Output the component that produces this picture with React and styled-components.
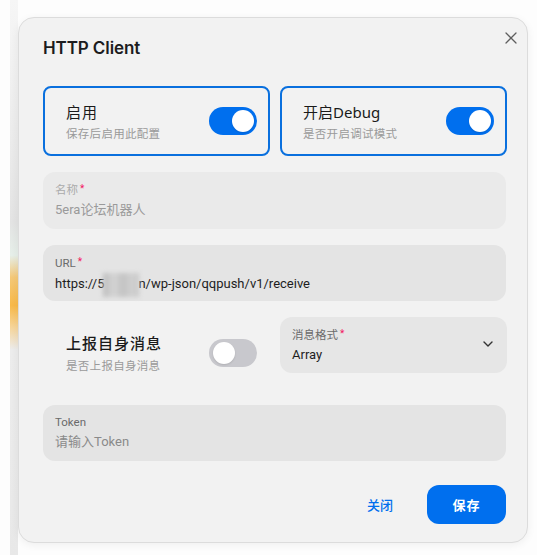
import React from "react";
import styled, { createGlobalStyle } from "styled-components";

const Global = createGlobalStyle`
  html, body { margin: 0; padding: 0; }
  body {
    width: 537px;
    height: 555px;
    overflow: hidden;
    font-family: "Noto Sans", "Noto Sans CJK SC", sans-serif;
    background:
      linear-gradient(to bottom, #f6f6f6 0%, #e9e9e9 30%, #e3e3e3 40%, #e6efe9 46%, #f4c877 50%, #f8b948 55%, #f6d59a 59%, #ececec 63%, #e8e8e8 100%) 10px 0 / 8px 100% no-repeat,
      #fdfdfd;
  }
`;

const Page = styled.div`
  padding: 17px 0 0 18px;
`;

const Modal = styled.div`
  width: 510px;
  height: 526px;
  box-sizing: border-box;
  background: #f2f2f2;
  border: 1px solid #dcdcdc;
  border-radius: 16px;
  box-shadow: 0 2px 8px rgba(0, 0, 0, 0.06);
  padding: 18px 21px 0 24px;
  display: flex;
  flex-direction: column;
  position: relative;
`;

const Header = styled.div`
  display: flex;
  align-items: center;
  height: 24px;
  margin-bottom: 26px;
`;

const Title = styled.h2`
  margin: 0;
  font-family: "Inter", "Noto Sans", sans-serif;
  font-size: 17px;
  font-weight: 600;
  color: #1c1c1e;
  letter-spacing: -0.1px;
`;

const CloseBtn = styled.button`
  position: absolute;
  top: 8px;
  right: 4px;
  width: 24px;
  height: 24px;
  border: 0;
  padding: 0;
  background: transparent;
  display: flex;
  align-items: center;
  justify-content: center;
  cursor: pointer;
`;

const Body = styled.div`
  display: flex;
  flex-direction: column;
`;

const Row = styled.div`
  display: grid;
  grid-template-columns: 227px 227px;
  align-items: start;
  gap: 10px;
  margin-bottom: 16px;
`;

const SwitchCard = styled.div`
  box-sizing: border-box;
  height: ${(p) => (p.$h ? p.$h : 70)}px;
  border: 2px solid ${(p) => (p.$bordered ? "#0a70de" : "transparent")};
  border-radius: 8px;
  display: flex;
  align-items: center;
  justify-content: space-between;
  padding: 0 11px 0 21px;
`;

const TextCol = styled.div`
  display: flex;
  flex-direction: column;
  gap: ${(p) => p.$gap || 3}px;
`;

const CardTitle = styled.div`
  font-family: "Noto Sans", "Noto Sans CJK SC", sans-serif;
  font-size: 15px;
  line-height: 20px;
  font-weight: ${(p) => p.$weight || 400};
  color: #1a1a1a;
  letter-spacing: ${(p) => p.$ls || 0}px;
`;

const CardDesc = styled.div`
  font-family: "Noto Sans CJK SC", sans-serif;
  font-size: 11.5px;
  line-height: 16px;
  color: #9a9a9a;
  letter-spacing: 0.3px;
`;

const Track = styled.div`
  width: 48px;
  height: 28px;
  border-radius: 14px;
  background: ${(p) => (p.$on ? "#006fee" : "#c8c8cd")};
  display: flex;
  align-items: center;
  justify-content: ${(p) => (p.$on ? "flex-end" : "flex-start")};
  padding: 0 3.5px;
  box-sizing: border-box;
  flex-shrink: 0;
`;

const Thumb = styled.div`
  width: 22px;
  height: 22px;
  border-radius: 50%;
  background: #fff;
  box-shadow: 0 1px 2px rgba(0, 0, 0, 0.12);
`;

const Field = styled.div`
  box-sizing: border-box;
  height: ${(p) => p.$h || 56}px;
  background: ${(p) => p.$bg || "#e4e4e4"};
  border-radius: 12px;
  padding: 8px 12px 0 12px;
  display: flex;
  flex-direction: column;
  margin-bottom: ${(p) => (p.$mb != null ? p.$mb : 16)}px;
`;

const Label = styled.div`
  font-family: "Roboto", "Noto Sans CJK SC", sans-serif;
  font-size: 11.5px;
  line-height: 18px;
  color: ${(p) => p.$color || "#6b6b6b"};
`;

const Star = styled.span`
  color: #f31260;
  margin-left: 2px;
  font-size: 10px;
  vertical-align: 2px;
`;

const Value = styled.div`
  font-family: "Roboto", "Noto Sans CJK SC", sans-serif;
  font-size: 13px;
  line-height: 20px;
  margin-top: 1px;
  color: ${(p) => p.$color || "#1e1e1e"};
  white-space: nowrap;
`;

const Blur = styled.span`
  display: inline-block;
  width: 36px;
  height: 24px;
  vertical-align: -9px;
  background: linear-gradient(90deg, #bdbdbd 0%, #d4d4d4 30%, #c3c3c3 55%, #d0d0d0 80%, #c8c8c8 100%);
  filter: blur(2px);
  margin: 0 -1px;
`;

const SelectField = styled(Field)`
  flex-direction: row;
  align-items: flex-start;
  justify-content: space-between;
  padding-right: 14px;
`;

const Chevron = styled.div`
  display: flex;
  margin-top: 16px;
`;

const Footer = styled.div`
  display: flex;
  justify-content: flex-end;
  align-items: center;
  gap: 15px;
  margin-top: 24px;
`;

const Button = styled.button`
  height: 39px;
  min-width: ${(p) => (p.$primary ? 79 : 64)}px;
  border: 0;
  border-radius: 12px;
  background: ${(p) => (p.$primary ? "#006fee" : "transparent")};
  color: ${(p) => (p.$primary ? "#ffffff" : "#006fee")};
  font-family: "Noto Sans CJK SC", sans-serif;
  font-size: 13px;
  font-weight: ${(p) => (p.$primary ? 700 : 500)};
  letter-spacing: ${(p) => (p.$primary ? 1 : 0)}px;
  padding: 0 16px;
  cursor: pointer;
`;

const Switch = ({ on }) => (
  <Track $on={on}>
    <Thumb />
  </Track>
);

export default function App() {
  return (
    <>
      <Global />
      <Page>
        <Modal>
          <Header>
            <Title>HTTP Client</Title>
          </Header>
          <CloseBtn aria-label="close">
            <svg width="12" height="12" viewBox="0 0 12 12" fill="none">
              <path d="M1 1L11 11M11 1L1 11" stroke="#5e5e5e" strokeWidth="1.25" strokeLinecap="round" />
            </svg>
          </CloseBtn>
          <Body>
            <Row>
              <SwitchCard $bordered>
                <TextCol>
                  <CardTitle $ls={1}>启用</CardTitle>
                  <CardDesc>保存后启用此配置</CardDesc>
                </TextCol>
                <Switch on />
              </SwitchCard>
              <SwitchCard $bordered>
                <TextCol>
                  <CardTitle>开启Debug</CardTitle>
                  <CardDesc>是否开启调试模式</CardDesc>
                </TextCol>
                <Switch on />
              </SwitchCard>
            </Row>
            <Field $bg="#eaeaea" $h={57}>
              <Label $color="#ababab">
                名称<Star>*</Star>
              </Label>
              <Value $color="#9a9a9a">5era论坛机器人</Value>
            </Field>
            <Field>
              <Label>
                URL<Star>*</Star>
              </Label>
              <Value>
                https://5<Blur />n/wp-json/qqpush/v1/receive
              </Value>
            </Field>
            <Row>
              <SwitchCard $h={72}>
                <TextCol $gap={4}>
                  <CardTitle $weight={500} $ls={1}>上报自身消息</CardTitle>
                  <CardDesc>是否上报自身消息</CardDesc>
                </TextCol>
                <Switch />
              </SwitchCard>
              <SelectField $mb={0} $bg="#e6e6e6">
                <div>
                  <Label>
                    消息格式<Star>*</Star>
                  </Label>
                  <Value>Array</Value>
                </div>
                <Chevron>
                  <svg width="10" height="6" viewBox="0 0 10 6" fill="none">
                    <path d="M1 1L5 5L9 1" stroke="#333" strokeWidth="1.4" strokeLinecap="round" strokeLinejoin="round" />
                  </svg>
                </Chevron>
              </SelectField>
            </Row>
            <Field $mb={0}>
              <Label>Token</Label>
              <Value $color="#8a8a8a">请输入Token</Value>
            </Field>
          </Body>
          <Footer>
            <Button>关闭</Button>
            <Button $primary>保存</Button>
          </Footer>
        </Modal>
      </Page>
    </>
  );
}
